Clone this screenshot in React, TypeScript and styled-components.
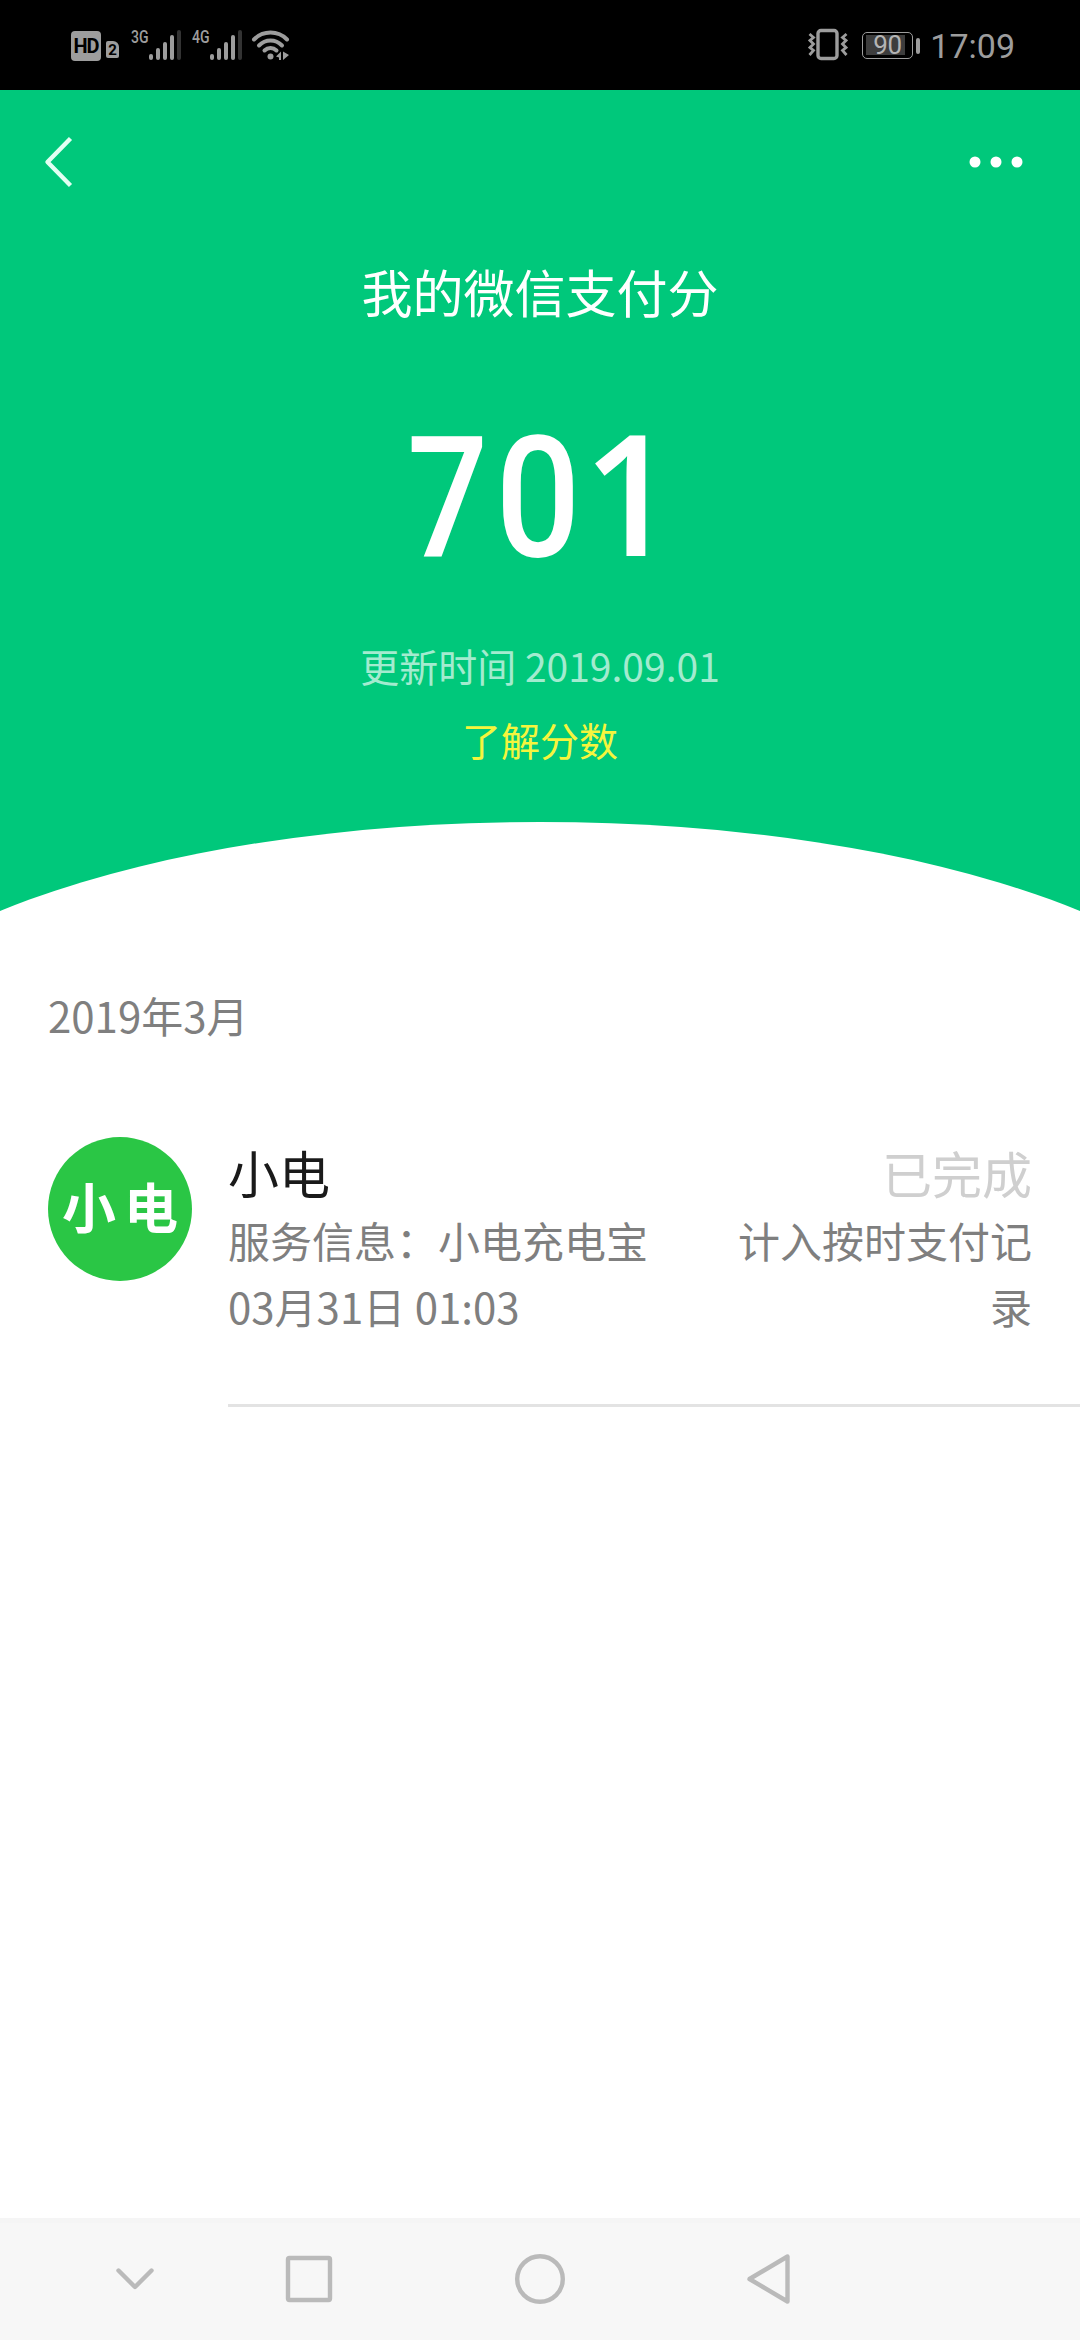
import React from 'react';
import styled, { createGlobalStyle } from 'styled-components';

const GlobalStyle = createGlobalStyle`
  * { box-sizing: border-box; }
  body {
    margin: 0;
    background: #ffffff;
    font-family: 'Noto Sans CJK SC', 'Noto Sans', sans-serif;
  }
`;

const Screen = styled.div`
  width: 1080px;
  height: 2340px;
  display: flex;
  flex-direction: column;
  background: #ffffff;
  overflow: hidden;
`;

/* ---------- status bar ---------- */

const StatusBar = styled.header`
  height: 90px;
  flex: none;
  display: flex;
  justify-content: space-between;
  align-items: flex-start;
  padding: 28px 65px 0 71px;
  background: #000000;
  color: #9d9d9d;
  font-family: Roboto, 'Liberation Sans', sans-serif;
`;

const StatusGroup = styled.div`
  display: flex;
  align-items: flex-start;
  height: 34px;
`;

const HdBadge = styled.span`
  width: 30px;
  height: 30px;
  margin-top: 3px;
  border-radius: 4px;
  background: #9d9d9d;
  color: #000000;
  font-size: 20px;
  font-weight: 700;
  line-height: 31px;
  display: flex;
  justify-content: center;
  letter-spacing: -1px;
`;

const SimBadge = styled.span`
  width: 13px;
  height: 17px;
  margin: 13px 0 0 5px;
  border-radius: 2px 6px 2px 2px;
  background: #9d9d9d;
  color: #000000;
  font-size: 15px;
  font-weight: 700;
  line-height: 18px;
  text-align: center;
`;

const Signal = styled.div<{ $gap: number }>`
  display: flex;
  align-items: flex-start;
  margin-left: ${(p) => p.$gap}px;
`;

const SignalLabel = styled.span`
  width: 18px;
  font-family: Roboto, sans-serif;
  font-size: 18.5px;
  font-weight: 500;
  line-height: 18px;
  white-space: nowrap;

  > span {
    display: inline-block;
    transform: scaleX(0.76);
    transform-origin: left center;
  }
`;

const Bars = styled.div`
  display: flex;
  align-items: flex-end;
  gap: 3px;
  height: 32px;
`;

const Bar = styled.i<{ $h: number; $dim?: boolean }>`
  width: 4px;
  height: ${(p) => p.$h}px;
  border-radius: 2px;
  background: ${(p) => (p.$dim ? '#333333' : '#9d9d9d')};
`;

const WifiIcon = styled.svg`
  margin: 1px 0 0 9px;
`;

const BatteryBody = styled.div`
  width: 51px;
  height: 27px;
  margin: 4px 0 0 14px;
  padding: 2px 3px;
  border: 1.5px solid #9d9d9d;
  border-radius: 5px;
`;

const BatteryLevel = styled.div`
  width: 39px;
  height: 20px;
  background: #3d3d3d;
  color: #b4b4b4;
  font-size: 26px;
  line-height: 20px;
  padding-left: 7px;
  white-space: nowrap;
  letter-spacing: -0.5px;
`;

const BatteryCap = styled.div`
  width: 4px;
  height: 16px;
  margin: 10px 0 0 3px;
  border-radius: 2px;
  background: #9d9d9d;
`;

const Clock = styled.time`
  margin-left: 10px;
  font-size: 34px;
  line-height: 34px;
  margin-top: 1px;
`;

/* ---------- score header ---------- */

const Hero = styled.section`
  height: 732px;
  flex: none;
  display: flex;
  flex-direction: column;
  align-items: center;
  background: #00c87b;
  color: #ffffff;
`;

const NavBar = styled.nav`
  align-self: stretch;
  height: 144px;
  display: flex;
  align-items: center;
  justify-content: space-between;
  padding: 0 56px 0 42px;
`;

const Title = styled.h1`
  margin: 27px 0 0;
  font-size: 51px;
  font-weight: 400;
  line-height: 60px;
`;

const Score = styled.div`
  display: flex;
  align-items: baseline;
  width: 256px;
  height: 160px;
  margin-top: 98px;
  font-family: Roboto, 'Liberation Sans', sans-serif;
  font-size: 168px;
  font-weight: 500;
  line-height: 160px;
`;

const Digit = styled.span<{ $w: number; $scale: number; $flag?: boolean }>`
  width: ${(p) => p.$w}px;
  display: flex;
  justify-content: center;
  transform: scaleX(${(p) => p.$scale});
  ${(p) => p.$flag && "font-family: 'Open Sans', sans-serif; font-weight: 600; line-height: 144px;"}
`;

const Updated = styled.p`
  margin: 56px 0 0;
  font-size: 39px;
  line-height: 60px;
  color: #a3ebcf;
`;

const Learn = styled.a`
  margin-top: 14px;
  font-size: 39px;
  line-height: 60px;
  color: #f5f53d;
`;

const Curve = styled.div`
  height: 90px;
  flex: none;
  background: #00c87b;
  overflow: hidden;

  &::before {
    content: '';
    display: block;
    width: 1444px;
    height: 530px;
    margin-left: -182px;
    border-radius: 50%;
    background: #ffffff;
  }
`;

/* ---------- records ---------- */

const Records = styled.main`
  flex: 1;
  padding-top: 72px;
`;

const Month = styled.h2`
  margin: 0 0 0 48px;
  font-size: 42px;
  font-weight: 400;
  line-height: 62px;
  color: #7f7f7f;
`;

const Record = styled.article`
  display: flex;
  margin-top: 91px;
  padding-left: 48px;
`;

const Avatar = styled.div`
  width: 144px;
  height: 144px;
  flex: none;
  display: flex;
  align-items: center;
  justify-content: center;
  gap: 8px;
  border-radius: 50%;
  background: #2ac645;
  color: #ffffff;
  font-size: 54px;
  font-weight: 700;
  line-height: 138px;
  padding-bottom: 6px;
`;

const RecordBody = styled.div`
  flex: 1;
  height: 270px;
  display: flex;
  justify-content: space-between;
  margin-left: 36px;
  padding-right: 48px;
  border-bottom: 3px solid #e3e3e3;
`;

const Column = styled.div<{ $right?: boolean }>`
  display: flex;
  flex-direction: column;
  width: ${(p) => (p.$right ? '300px' : 'auto')};
  text-align: ${(p) => (p.$right ? 'right' : 'left')};
`;

const Headline = styled.div<{ $muted?: boolean }>`
  font-size: ${(p) => (p.$muted ? 50 : 51)}px;
  line-height: 70px;
  color: ${(p) => (p.$muted ? '#cfcfcf' : '#1a1a1a')};
`;

const Detail = styled.div`
  font-size: 42px;
  line-height: 66px;
  color: #7f7f7f;
`;

/* ---------- system navigation ---------- */

const SystemNav = styled.footer`
  height: 122px;
  flex: none;
  display: flex;
  align-items: center;
  padding-left: 105px;
  background: #f7f7f7;
  border-top: 5px solid #f5f5f5;
`;

const NavIcon = styled.svg<{ $gap?: number }>`
  width: 60px;
  height: 60px;
  margin: -5px 0 0 ${(p) => p.$gap ?? 0}px;
  fill: none;
  stroke: #bababa;
  stroke-width: 4.4;
  stroke-linecap: round;
  stroke-linejoin: round;
`;

function SignalMeter({ label, gap }: { label: string; gap: number }) {
  return (
    <Signal $gap={gap}>
      <SignalLabel>
        <span>{label}</span>
      </SignalLabel>
      <Bars>
        <Bar $h={6} />
        <Bar $h={12} />
        <Bar $h={18} />
        <Bar $h={25} />
        <Bar $h={30} $dim />
      </Bars>
    </Signal>
  );
}

export default function App() {
  return (
    <Screen>
      <GlobalStyle />
      <StatusBar>
        <StatusGroup>
          <HdBadge>HD</HdBadge>
          <SimBadge>2</SimBadge>
          <SignalMeter label="3G" gap={12} />
          <SignalMeter label="4G" gap={11} />
          <WifiIcon width="40" height="34" viewBox="0 0 40 34" fill="none" stroke="#9d9d9d" strokeWidth="4" strokeLinecap="round">
            <path d="M3 10.5C12 1.2 27 1.2 36 10.5" />
            <path d="M8 16.5C14.5 9.8 24.5 9.8 31 16.5" />
            <path d="M13.5 21.5C17 18 22 18 25.5 21.5" />
            <circle cx="19.5" cy="27.5" r="3" fill="#9d9d9d" stroke="none" />
            <path d="M25 27.5L30 22.5V31H28V28.5ZM32 31V22.5L38 26Z" fill="#9d9d9d" stroke="none" />
          </WifiIcon>
        </StatusGroup>
        <StatusGroup>
          <svg width="40" height="34" viewBox="0 0 40 34" fill="none" stroke="#9d9d9d" strokeWidth="3.4">
            <rect x="10" y="2.5" width="19" height="28" rx="3" />
            <path d="M1.5 6L5.5 9.5L2 12.5L5.5 16L2 19.5L5.5 22.5L1.5 27" strokeWidth="2.8" />
            <path d="M38.5 6L34.5 9.5L38 12.5L34.5 16L38 19.5L34.5 22.5L38.5 27" strokeWidth="2.8" />
          </svg>
          <BatteryBody>
            <BatteryLevel>90</BatteryLevel>
          </BatteryBody>
          <BatteryCap />
          <Clock>17:09</Clock>
        </StatusGroup>
      </StatusBar>

      <Hero>
        <NavBar>
          <svg width="34" height="56" viewBox="0 0 34 56" fill="none" stroke="#e2fff3" strokeWidth="4.4" strokeLinejoin="round">
            <path d="M28.5 4.5L5.5 28L28.5 51.5" />
          </svg>
          <svg width="56" height="14" viewBox="0 0 56 14" fill="#ffffff">
            <circle cx="7" cy="7" r="5.5" />
            <circle cx="28" cy="7" r="5.5" />
            <circle cx="49" cy="7" r="5.5" />
          </svg>
        </NavBar>
        <Title>我的微信支付分</Title>
        <Score>
          <Digit $w={71} $scale={0.85}>7</Digit>
          <Digit $w={110} $scale={0.89}>0</Digit>
          <Digit $w={73} $scale={0.97} $flag>1</Digit>
        </Score>
        <Updated>更新时间 2019.09.01</Updated>
        <Learn>了解分数</Learn>
      </Hero>
      <Curve />

      <Records>
        <Month>2019年3月</Month>
        <Record>
          <Avatar>
            <span>小</span>
            <span>电</span>
          </Avatar>
          <RecordBody>
            <Column>
              <Headline>小电</Headline>
              <Detail>服务信息：小电充电宝</Detail>
              <Detail>03月31日 01:03</Detail>
            </Column>
            <Column $right>
              <Headline $muted>已完成</Headline>
              <Detail>计入按时支付记录</Detail>
            </Column>
          </RecordBody>
        </Record>
      </Records>

      <SystemNav>
        <NavIcon viewBox="0 0 60 60">
          <path d="M13.5 21.5L30 38L46.5 21.5" />
        </NavIcon>
        <NavIcon viewBox="0 0 60 60" $gap={114}>
          <rect x="9" y="9" width="42" height="42" rx="1.5" />
        </NavIcon>
        <NavIcon viewBox="0 0 60 60" $gap={171}>
          <circle cx="30" cy="30" r="22.8" />
        </NavIcon>
        <NavIcon viewBox="0 0 60 60" $gap={168}>
          <path d="M49.5 7.5V52.5L11.5 30Z" />
        </NavIcon>
      </SystemNav>
    </Screen>
  );
}
